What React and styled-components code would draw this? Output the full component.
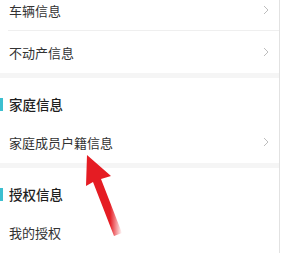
import React from "react";
import styled, { createGlobalStyle } from "styled-components";

const Global = createGlobalStyle`
  html, body { margin: 0; padding: 0; background: #fff; overflow: hidden; }
  body { font-family: "Noto Sans CJK SC", "Noto Sans", sans-serif; }
`;

const Screen = styled.div`
  position: relative;
  width: 283px;
  height: 254px;
  overflow: hidden;
  background: #fff;
`;

const Panel = styled.div`
  width: 279px;
  border-right: 1px solid #e2e2e2;
  margin-top: -11px;
  background: #fff;
`;

const Row = styled.div`
  height: 42px;
  display: flex;
  align-items: center;
  justify-content: space-between;
  padding: 0 10px 0 9px;
  font-size: 13px;
  color: #333;
  position: relative;
  ${(p) =>
    p.$divider &&
    `&::after{content:"";position:absolute;left:8px;right:0;bottom:0;height:1px;background:#efefef;}`}
`;

const Band = styled.div`
  height: 5px;
  background: #f5f5f5;
`;

const Header = styled.div`
  height: 34px;
  padding-top: 9px;
  display: flex;
  align-items: center;
  gap: 6px;
  font-size: 13.5px;
  font-weight: 500;
  color: #1f1f1f;
  &::before {
    content: "";
    width: 3px;
    height: 13px;
    background: #3cbfd0;
  }
`;

const Patch = styled.div`
  position: absolute;
  left: 110px;
  top: 168px;
  width: 169px;
  height: 74px;
  background: linear-gradient(to right, rgba(255,255,255,0) 0px, #fff 12px);
`;

const ArrowSvg = styled.svg`
  position: absolute;
  left: 0;
  top: 0;
`;

const Chevron = () => (
  <svg width="6" height="10" viewBox="0 0 6 10">
    <path d="M1 1 L5 5 L1 9" fill="none" stroke="#bdbdbd" strokeWidth="1" />
  </svg>
);

const Item = ({ label, chevron = true, divider }) => (
  <Row $divider={divider}>
    <span>{label}</span>
    {chevron && <Chevron />}
  </Row>
);

export default function App() {
  return (
    <Screen>
      <Global />
      <Panel>
        <Item label="车辆信息" divider />
        <Item label="不动产信息" />
        <Band />
        <Header>家庭信息</Header>
        <Item label="家庭成员户籍信息" />
        <Band />
        <Header>授权信息</Header>
        <Item label="我的授权" chevron={false} />
      </Panel>
      <ArrowSvg width="283" height="254" viewBox="0 0 283 254">
        <polygon
          points="87,155 111,176 101,179 122,233 114,236 93,182 86,186"
          fill="#e51c23"
        />
      </ArrowSvg>
      <Patch />
    </Screen>
  );
}
